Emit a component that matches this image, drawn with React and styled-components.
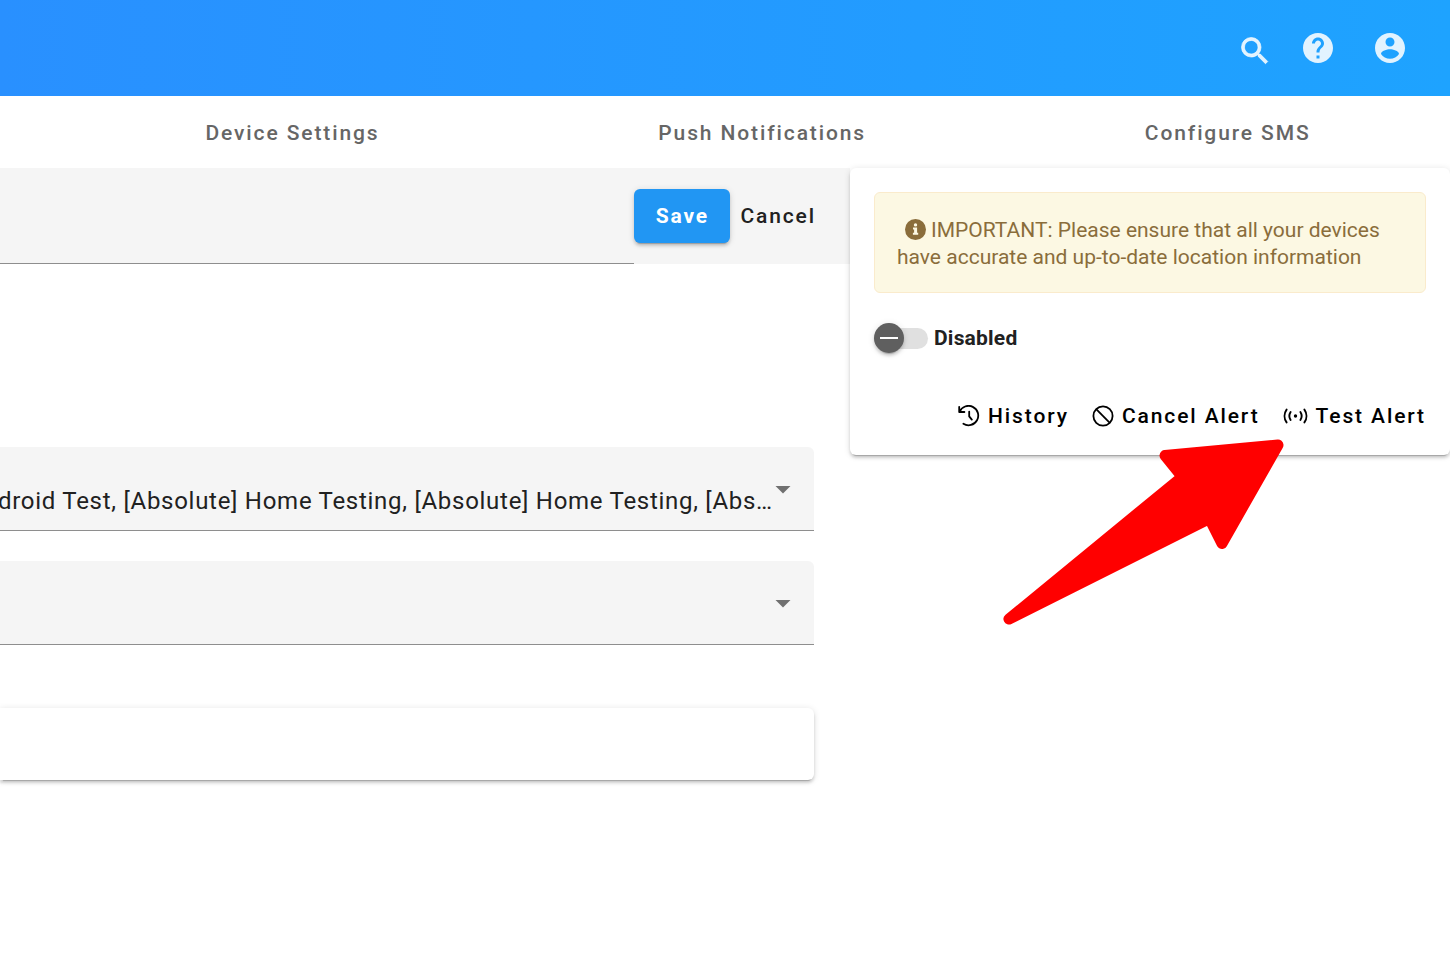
import React from "react";
import styled, { createGlobalStyle } from "styled-components";

const GlobalStyle = createGlobalStyle`
  *, *::before, *::after { box-sizing: border-box; }
  body {
    margin: 0;
    background: #fff;
    color: #212121;
    font-family: Roboto, "Liberation Sans", sans-serif;
    font-size: 21px;
  }
  button, input, select { font: inherit; color: inherit; }
`;

const elevation = `
  box-shadow:
    0 4px 1px -3px rgba(0, 0, 0, 0.2),
    0 3px 3px 0 rgba(0, 0, 0, 0.14),
    0 1px 7px 0 rgba(0, 0, 0, 0.12);
`;

const TopBar = styled.header`
  display: flex;
  justify-content: flex-end;
  align-items: center;
  height: 96px;
  padding-right: 24px;
  background: linear-gradient(90deg, #2990ff 0%, #1ea3ff 100%);
`;

const IconButton = styled.button`
  display: grid;
  place-items: center;
  width: 72px;
  height: 72px;
  padding: 0;
  border: 0;
  background: none;
  color: rgba(255, 255, 255, 0.87);
`;

const SearchButton = styled(IconButton)`
  width: 54px;
  padding-top: 6px;
`;

const Tabs = styled.nav`
  display: flex;
  height: 72px;
  padding-left: 66px;
`;

const Tab = styled.a`
  flex: 1 1 auto;
  display: flex;
  align-items: center;
  justify-content: center;
  padding-top: 2px;
  color: #666;
  font-weight: 500;
  letter-spacing: 0.09em;
  text-decoration: none;
  white-space: nowrap;
`;

const Page = styled.main`
  display: grid;
  grid-template-columns: 17fr 12fr;
  align-items: start;
  padding-bottom: 48px;
`;

const Settings = styled.form`
  min-width: 0;
`;

const TitleRow = styled.div`
  display: flex;
  align-items: center;
  height: 96px;
  padding-right: 34px;
  background: #f5f5f5;
`;

const TitleInput = styled.input`
  flex: 1;
  min-width: 0;
  align-self: stretch;
  padding: 0 24px;
  border: 0;
  border-bottom: 1px solid #8e8e8e;
  border-radius: 0;
  background: transparent;
`;

const SaveButton = styled.button`
  width: 96px;
  height: 54px;
  padding: 0;
  border: 0;
  border-radius: 6px;
  background: #2196f3;
  color: #fff;
  font-weight: 700;
  letter-spacing: 0.09em;
  ${elevation}
`;

const TextButton = styled.button`
  display: flex;
  align-items: center;
  gap: 8px;
  padding: 0;
  border: 0;
  background: none;
  color: ${(p) => p.$color};
  font-weight: 500;
  line-height: 24px;
  letter-spacing: 0.09em;
  white-space: nowrap;
`;

const CancelWrap = styled.div`
  padding-left: 10px;
`;

const Fields = styled.div`
  display: flex;
  flex-direction: column;
  gap: 30px;
  padding: 183px 36px 0 0;
`;

const SelectBox = styled.div`
  position: relative;
  height: 84px;
  overflow: hidden;
  border-bottom: 1px solid #8e8e8e;
  border-radius: 0 6px 0 0;
  background: #f5f5f5;
`;

const Select = styled.select`
  appearance: none;
  width: 100%;
  height: 100%;
  margin-left: -2px;
  padding: 24px 36px 0 0;
  border: 0;
  background: transparent;
  font-size: 24px;
  letter-spacing: 0.03em;
`;

const Caret = styled.svg`
  position: absolute;
  right: 23px;
  top: 39px;
  pointer-events: none;
`;

const Panel = styled.section`
  height: 72px;
  margin: 63px 36px 0 0;
  border-radius: 0 6px 6px 0;
  background: #fff;
  ${elevation}
`;

const AlertCard = styled.aside`
  position: relative;
  padding: 24px 24px 27px;
  border-radius: 6px;
  background: #fff;
  ${elevation}
`;

const Notice = styled.p`
  margin: 0;
  padding: 24px 22px 21px;
  border: 1px solid #faebcc;
  border-radius: 6px;
  background: #fcf8e3;
  color: #8a6d3b;
  line-height: 27px;
`;

const InfoIcon = styled.svg`
  margin: 0 5px 0 8px;
  vertical-align: -3px;
`;

const SwitchLabel = styled.label`
  display: flex;
  align-items: center;
  gap: 6px;
  margin-top: 30px;
  font-weight: 700;
  letter-spacing: 0.01em;
`;

const Switch = styled.input`
  appearance: none;
  position: relative;
  display: flex;
  align-items: center;
  width: 54px;
  height: 30px;
  margin: 0;

  &::before {
    content: "";
    flex: 1;
    height: 21px;
    border-radius: 11px;
    background: #e0e0e0;
  }
  &::after {
    content: "";
    position: absolute;
    left: 0;
    width: 30px;
    height: 30px;
    border-radius: 50%;
    background: linear-gradient(#fff, #fff) center / 18px 2px no-repeat #5f5f5f;
    ${elevation}
  }
  &:checked::after { left: 24px; }
`;

const Actions = styled.div`
  display: flex;
  justify-content: flex-end;
  gap: 23px;
  margin-top: 51px;
`;

const Pointer = styled.svg`
  position: absolute;
  right: 160px;
  top: 266px;
  pointer-events: none;
`;

const HeaderIcon = ({ d, weight = 0 }) => (
  <svg width="36" height="36" viewBox="0 0 24 24" fill="currentColor" aria-hidden="true">
    <path d={d} stroke="currentColor" strokeWidth={weight} />
  </svg>
);

const searchPath =
  "M15.5 14h-.79l-.28-.27A6.471 6.471 0 0 0 16 9.5 6.5 6.5 0 1 0 9.5 16c1.61 0 3.09-.59 4.23-1.57l.27.28v.79l5 4.99L20.49 19l-4.99-5zm-6 0C7.01 14 5 11.99 5 9.5S7.01 5 9.5 5 14 7.01 14 9.5 11.99 14 9.5 14z";
const helpPath =
  "M12 2C6.48 2 2 6.48 2 12s4.48 10 10 10 10-4.48 10-10S17.52 2 12 2zm1 17h-2v-2h2v2zm2.07-7.75l-.9.92C13.45 12.9 13 13.5 13 15h-2v-.5c0-1.1.45-2.1 1.17-2.83l1.24-1.26c.37-.36.59-.86.59-1.41 0-1.1-.9-2-2-2s-2 .9-2 2H8c0-2.21 1.79-4 4-4s4 1.79 4 4c0 .88-.36 1.68-.93 2.25z";
const accountPath =
  "M12 2C6.48 2 2 6.48 2 12s4.48 10 10 10 10-4.48 10-10S17.52 2 12 2zm0 3c1.66 0 3 1.34 3 3s-1.34 3-3 3-3-1.34-3-3 1.34-3 3-3zm0 14.2c-2.5 0-4.71-1.28-6-3.22.03-1.99 4-3.08 6-3.08 1.99 0 5.97 1.09 6 3.08-1.29 1.94-3.5 3.22-6 3.22z";

const HistoryIcon = () => (
  <svg width="22" height="22" viewBox="0 0 22 22" fill="none" stroke="currentColor" strokeWidth="1.8" strokeLinecap="round" strokeLinejoin="round" aria-hidden="true">
    <path d="M1.2 1.8v5.2h5.2M1.6 6.8A9.7 9.7 0 1 1 5.4 18.8M11.2 6.6v4.8l2.6 3.2" />
  </svg>
);

const BanIcon = () => (
  <svg width="22" height="22" viewBox="0 0 22 22" fill="none" stroke="currentColor" strokeWidth="1.8" aria-hidden="true">
    <circle cx="11" cy="11" r="9.6" />
    <path d="M4.2 4.2l13.6 13.6" />
  </svg>
);

const SignalIcon = () => (
  <svg width="25" height="22" viewBox="0 0 25 22" fill="none" stroke="currentColor" strokeWidth="1.9" strokeLinecap="round" aria-hidden="true">
    <path d="M3.6 4.6a11 11 0 0 0 0 12.8M21.4 4.6a11 11 0 0 1 0 12.8M7.6 7a7.4 7.4 0 0 0 0 8M17.4 7a7.4 7.4 0 0 1 0 8" />
    <circle cx="12.5" cy="11" r="1.7" fill="currentColor" stroke="none" />
  </svg>
);

const Dropdown = ({ label, options }) => (
  <SelectBox>
    <Select aria-label={label}>
      {options.map((o) => (
        <option key={o}>{o}</option>
      ))}
    </Select>
    <Caret width="16" height="8" viewBox="0 0 16 8" aria-hidden="true">
      <path d="M0.5 0h15L8 7.5z" fill="#707070" />
    </Caret>
  </SelectBox>
);

export default function App() {
  return (
    <>
      <GlobalStyle />
      <TopBar>
        <SearchButton aria-label="Search">
          <HeaderIcon d={searchPath} weight={0.5} />
        </SearchButton>
        <IconButton aria-label="Help">
          <HeaderIcon d={helpPath} />
        </IconButton>
        <IconButton aria-label="Account">
          <HeaderIcon d={accountPath} />
        </IconButton>
      </TopBar>
      <Tabs>
        <Tab href="#device">Device Settings</Tab>
        <Tab href="#push">Push Notifications</Tab>
        <Tab href="#sms">Configure SMS</Tab>
      </Tabs>
      <Page>
        <Settings onSubmit={(e) => e.preventDefault()}>
          <TitleRow>
            <TitleInput aria-label="Title" />
            <SaveButton type="submit">Save</SaveButton>
            <CancelWrap>
              <TextButton type="button" $color="#212121">Cancel</TextButton>
            </CancelWrap>
          </TitleRow>
          <Fields>
            <Dropdown
              label="Groups"
              options={["droid Test, [Absolute] Home Testing, [Absolute] Home Testing, [Abs…"]}
            />
            <Dropdown label="Devices" options={[""]} />
          </Fields>
          <Panel />
        </Settings>
        <AlertCard>
          <Notice>
            <InfoIcon width="21" height="21" viewBox="0 0 21 21" role="img" aria-label="Info">
              <circle cx="10.5" cy="10.5" r="10.5" fill="#8a6d3b" />
              <path d="M8 8.6h4.1v5.2h1.1v2H7.9v-2h1.2v-3.2H8z" fill="#fcf8e3" />
              <circle cx="10.5" cy="5.9" r="1.7" fill="#fcf8e3" />
            </InfoIcon>
            IMPORTANT: Please ensure that all your devices have accurate and up-to-date location
            information
          </Notice>
          <SwitchLabel>
            <Switch type="checkbox" role="switch" />
            Disabled
          </SwitchLabel>
          <Actions>
            <TextButton type="button" $color="#000">
              <HistoryIcon />
              History
            </TextButton>
            <TextButton type="button" $color="#000">
              <BanIcon />
              Cancel Alert
            </TextButton>
            <TextButton type="button" $color="#000">
              <SignalIcon />
              Test Alert
            </TextButton>
          </Actions>
          <Pointer width="290" height="196" viewBox="1000 434 290 196" aria-hidden="true">
            <path
              d="M1009 619L1182.2 476.9 1165 455.5 1278 445 1222 543.5 1209.4 518.6z"
              fill="#f00"
              stroke="#f00"
              strokeWidth="11"
              strokeLinejoin="round"
            />
          </Pointer>
        </AlertCard>
      </Page>
    </>
  );
}
